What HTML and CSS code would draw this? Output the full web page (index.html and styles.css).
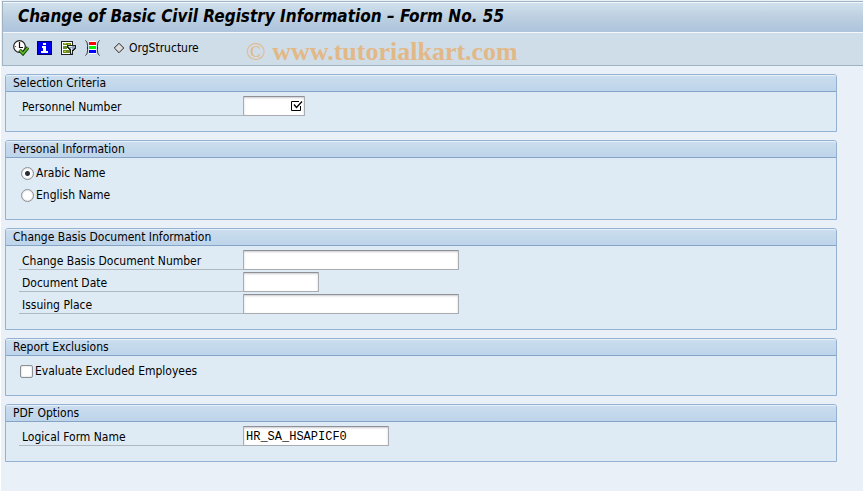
FILE: index.html
```
<!DOCTYPE html>
<html lang="en">
<head>
    <meta charset="UTF-8">
    <meta name="viewport" content="width=device-width, initial-scale=1.0">
    <link rel="stylesheet" href="styles.css">
    <title>Change of Basic Civil Registry Information</title>
</head>
<body>
    <header class="header">
        <h1 class="title">Change of Basic Civil Registry Information – Form No. 55</h1>
        <div class="toolbar">
            <button class="tool" type="button" aria-label="Execute">
                <svg width="16" height="16" viewBox="0 0 16 16">
                    <circle cx="6.5" cy="6.5" r="5.8" fill="#fff" stroke="#222" stroke-width="1.2"/>
                    <path d="M6.5 2v5.5H10" fill="none" stroke="#111" stroke-width="1.2"/>
                    <path d="M2 6.5h1M6.5 10v1.500" stroke="#555"/>
                    <path d="M6.500 10l3.500 3.500L15 7.500" fill="none" stroke="#123c00" stroke-width="3.600"/>
                    <path d="M6.500 10l3.500 3.500L15 7.500" fill="none" stroke="#5fb52a" stroke-width="1.800"/>
                </svg>
            </button>
            <button class="tool" type="button" aria-label="Information">
                <svg width="16" height="16" viewBox="0 0 16 16" shape-rendering="crispEdges">
                    <path fill="#000060" d="M0 1h15v14H0z"/>
                    <path fill="#0000f0" d="M1 2h13v12H1z"/>
                    <path fill="#fff" d="M6 3h3v2H6zM5 6h4v5h2v2H4v-2h2V8H5z"/>
                </svg>
            </button>
            <button class="tool" type="button" aria-label="Get variant">
                <svg width="16" height="16" viewBox="0 0 16 16" shape-rendering="crispEdges">
                    <path fill="#222" d="M0 1h12v14H0z"/>
                    <path fill="#fff" d="M1 2h10v12H1z"/>
                    <path fill="#6b8e23" d="M2 3h8v2H2zM2 6h4v3H2zM2 10h7v3H2z"/>
                    <path fill="#b9cc3c" d="M3 3h2v1H3zM7 4h2v1H7zM3 11h2v1H3z"/>
                    <path fill="#222" d="M6 5h9v3l-3 3v4H9v-4L6 8z"/>
                    <path fill="#8fa6b8" d="M7 6h7v1l-3 3v4h-1v-4L7 7z"/>
                    <path fill="#e8f0f5" d="M8 6h3v1H8zM10 8h1v5h-1z"/>
                </svg>
            </button>
            <button class="tool" type="button" aria-label="Organizational hierarchy">
                <svg width="16" height="16" viewBox="0 0 16 16">
                    <path d="M.5.5c2 2 2 3 2 7.500s0 5.500-2 7.500M14.500.5c-2 2-2 3-2 7.500s0 5.500 2 7.500" fill="none" stroke="#222"/>
                    <g shape-rendering="crispEdges">
                        <path fill="#fff" d="M4 1h7v13H4z"/>
                        <path fill="#f00" d="M4 2h7v3H4z"/>
                        <path fill="#0e0" d="M4 6h7v3H4z"/>
                        <path fill="#00f" d="M4 10h7v3H4z"/>
                    </g>
                </svg>
            </button>
            <button class="tool tool-text" type="button">
                <svg width="12" height="12" viewBox="0 0 12 12">
                    <path d="M6 1.300L10.700 6 6 10.700 1.300 6z" fill="#ddd" stroke="#222"/>
                </svg>
                OrgStructure
            </button>
        </div>
        <div class="watermark"><span class="copy">©</span> www.tutorialkart.com</div>
    </header>

    <form class="content">
        <section class="panel">
            <h2 class="panel-title">Selection Criteria</h2>
            <div class="panel-body">
                <div class="row">
                    <label class="label" for="pernr">Personnel Number</label>
                    <div class="required">
                        <input class="field short" type="text" id="pernr">
                        <svg class="required-icon" width="12" height="12" viewBox="0 0 12 12">
                            <path d="M8 1.500H.5v9h9V6" fill="none" stroke="#000"/>
                            <path d="M3 4.500L5.500 7.500l5.500-6" fill="none" stroke="#000" stroke-width="1.300"/>
                        </svg>
                    </div>
                </div>
            </div>
        </section>

        <section class="panel">
            <h2 class="panel-title">Personal Information</h2>
            <div class="panel-body">
                <div class="row choice">
                    <input class="radio" type="radio" name="lang" id="arabic" checked>
                    <label for="arabic">Arabic Name</label>
                </div>
                <div class="row choice">
                    <input class="radio" type="radio" name="lang" id="english">
                    <label for="english">English Name</label>
                </div>
            </div>
        </section>

        <section class="panel">
            <h2 class="panel-title">Change Basis Document Information</h2>
            <div class="panel-body">
                <div class="row">
                    <label class="label" for="docnum">Change Basis Document Number</label>
                    <input class="field long" type="text" id="docnum">
                </div>
                <div class="row">
                    <label class="label" for="docdate">Document Date</label>
                    <input class="field date" type="text" id="docdate">
                </div>
                <div class="row">
                    <label class="label" for="place">Issuing Place</label>
                    <input class="field long" type="text" id="place">
                </div>
            </div>
        </section>

        <section class="panel">
            <h2 class="panel-title">Report Exclusions</h2>
            <div class="panel-body">
                <div class="row choice">
                    <input class="checkbox" type="checkbox" id="excluded">
                    <label for="excluded">Evaluate Excluded Employees</label>
                </div>
            </div>
        </section>

        <section class="panel">
            <h2 class="panel-title">PDF Options</h2>
            <div class="panel-body">
                <div class="row">
                    <label class="label" for="formname">Logical Form Name</label>
                    <input class="field medium" type="text" id="formname" value="HR_SA_HSAPICF0">
                </div>
            </div>
        </section>
    </form>
</body>
</html>
```
FILE: styles.css
```
* {
    box-sizing: border-box;
}

body {
    margin: 0;
    padding: 1px 0 0 1px;
    min-height: 100vh;
    background-color: #e9f0f7;
    border-left: 1px solid #fff;
    font-family: "DejaVu Sans Condensed", "Noto Sans", sans-serif;
    font-size: 12px;
    color: #000;
}

/* Title bar and toolbar */
.header {
    position: relative;
    border: 1px solid #9fb3c5;
    border-right: none;
    background-color: #cfdde8;
}

.title {
    margin: 0;
    padding: 0 15px;
    height: 31px;
    line-height: 26px;
    font-size: 17px;
    font-weight: bold;
    font-style: italic;
    border-top: 1px solid #f4f8fb;
    border-bottom: 1px solid #f4f8fb;
    background-image: linear-gradient(#d0e0ec, #bccfe0 50%, #adc4dd);
    white-space: nowrap;
}

.toolbar {
    display: flex;
    align-items: center;
    gap: 8px;
    height: 32px;
    padding: 0 10px 2px;
}

.tool {
    display: flex;
    align-items: center;
    padding: 0;
    border: none;
    background: none;
    font: inherit;
    color: inherit;
}

.tool-text {
    gap: 4px;
    margin-left: 4px;
}

.watermark {
    position: absolute;
    left: 243px;
    top: 34px;
    font-family: "Liberation Serif", serif;
    font-size: 26px;
    line-height: 32px;
    font-weight: bold;
    color: #e3b887;
    white-space: nowrap;
    pointer-events: none;
}

.copy {
    font-weight: normal;
}

/* Selection screen */
.content {
    display: flex;
    flex-direction: column;
    gap: 8px;
    padding: 8px 26px 29px 3px;
}

.panel {
    border: 1px solid #93b1d0;
    border-radius: 3px 3px 0 0;
    background-color: #deebf4;
}

.panel-title {
    margin: 0;
    padding: 0 7px;
    height: 17px;
    line-height: 15px;
    font-size: 12px;
    font-weight: normal;
    border-top: 1px solid #e6f0f8;
    border-bottom: 1px solid #86a4c6;
    border-radius: 2px 2px 0 0;
    background-image: linear-gradient(#cbddee, #bdd4ea);
}

.panel-body {
    padding: 4px 13px 13px;
}

.row {
    display: flex;
    align-items: flex-start;
    height: 22px;
}

.label {
    width: 224px;
    height: 20px;
    padding-left: 3px;
    line-height: 22px;
    border-bottom: 1px solid #b0b8c0;
}

.field {
    display: block;
    height: 20px;
    padding: 1px 2px 0;
    border: 1px solid #a9adb2;
    border-top-color: #8e9196;
    border-radius: 1px;
    background-color: #fff;
    box-shadow: inset 0 1px 2px #c9c9d0;
    font-family: "Liberation Mono", monospace;
    font-size: 12px;
}

.short {
    width: 62px;
}

.date {
    width: 76px;
}

.medium {
    width: 146px;
}

.long {
    width: 216px;
}

.required {
    position: relative;
}

.required-icon {
    position: absolute;
    right: 2px;
    top: 4px;
}

.choice {
    align-items: center;
    gap: 2px;
    padding-left: 1px;
}

.radio,
.checkbox {
    appearance: none;
    width: 13px;
    height: 13px;
    margin: 0;
    border: 1px solid #8c8f94;
    background-color: #fff;
    box-shadow: inset 0 0 2px #c4c4c8;
}

.radio {
    margin-left: 1px;
    border-radius: 50%;
}

.radio:checked {
    background-image: radial-gradient(circle, #2c2c3c 2px, transparent 3px);
}

.checkbox {
    border-radius: 2px;
}
```
